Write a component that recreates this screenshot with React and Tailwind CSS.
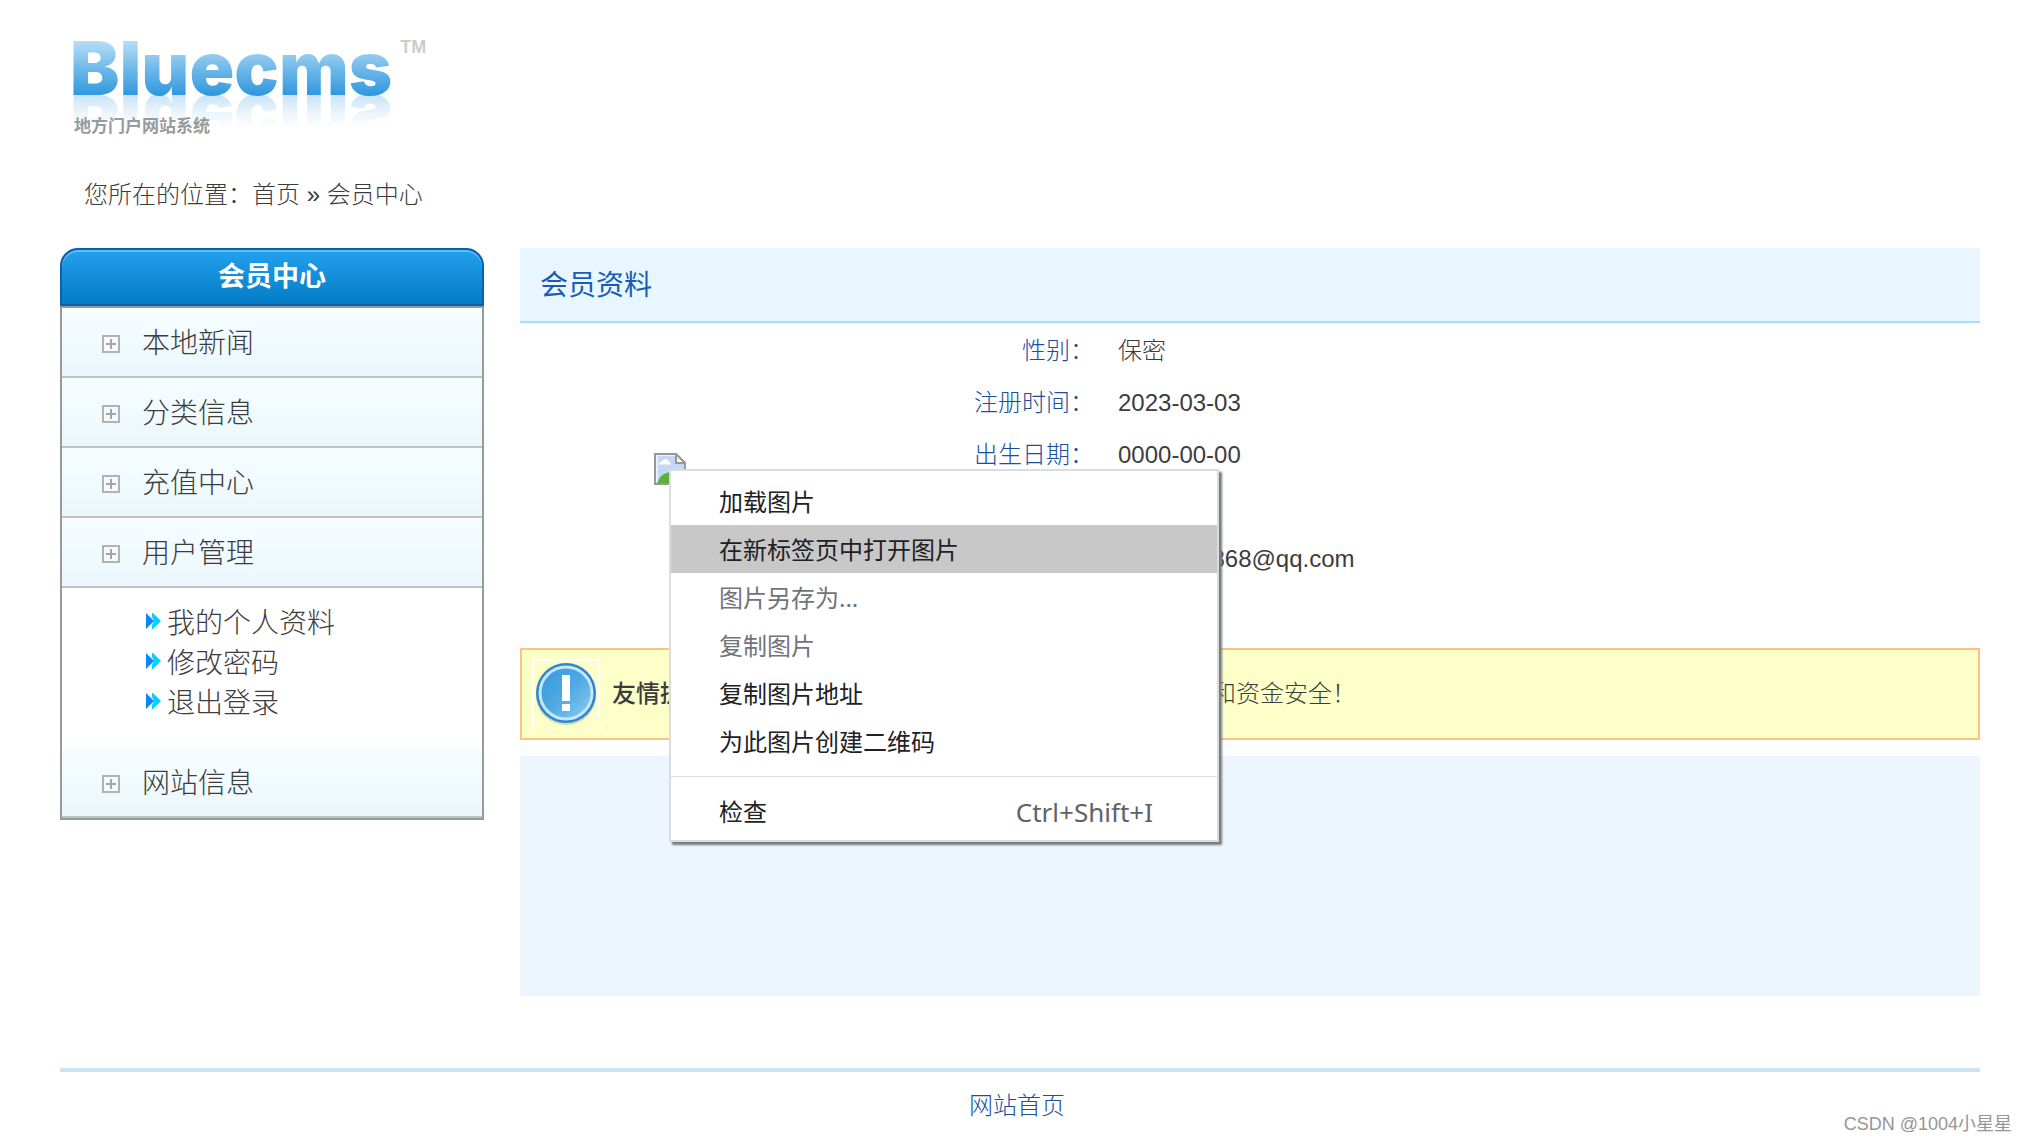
import React, { useState } from 'react';

const MENU = [
  { name: '本地新闻' },
  { name: '分类信息' },
  { name: '充值中心' },
  { name: '用户管理', children: ['我的个人资料', '修改密码', '退出登录'] },
  { name: '网站信息' },
];

const PROFILE = [
  { label: '性别', value: '保密' },
  { label: '注册时间', value: '2023-03-03' },
  { label: '出生日期', value: '0000-00-00' },
  { label: 'QQ', value: '' },
  { label: '电子邮件', value: '1000000868@qq.com' },
  { label: '手机', value: '' },
];

const CONTEXT_ITEMS = [
  { name: '加载图片' },
  { name: '在新标签页中打开图片' },
  { name: '图片另存为...', disabled: true },
  { name: '复制图片', disabled: true },
  { name: '复制图片地址' },
  { name: '为此图片创建二维码' },
];

function Logo() {
  return (
    <div className="pl-2.5">
      <div className="flex items-start gap-2">
        <span className="block h-[74px] bg-gradient-to-b from-[#b4dcf5] from-15% via-[#66b5e8] via-55% to-[#3199df] to-85% bg-clip-text text-transparent font-['Inter',sans-serif] font-black text-[74px] leading-none [-webkit-box-reflect:below_-20px_linear-gradient(transparent_40%,rgba(0,0,0,0.35))]">
          Bluecms
        </span>
        <span className="font-['Liberation_Sans_Narrow','Liberation_Sans',sans-serif] font-bold text-[18px] leading-6 pt-1 text-[#ccc]">TM</span>
      </div>
      <div className="mt-2.5 pl-1 text-[17px] leading-6 font-bold text-[#999]">地方门户网站系统</div>
    </div>
  );
}

function PlusBox() {
  return (
    <svg viewBox="0 0 18 18" className="w-[18px] h-[18px] shrink-0">
      <rect x="1" y="1" width="16" height="16" fill="#f6fafb" stroke="#b0b2b3" strokeWidth="2" />
      <path d="M4 9h10M9 4v10" stroke="#a3a5a6" strokeWidth="2" />
    </svg>
  );
}

function Arrows() {
  return (
    <svg viewBox="0 0 15 18" className="w-[15px] h-[18px] shrink-0">
      <path d="M0 1l8 8-8 8z" fill="#0a84ff" />
      <path d="M6 1h1l8 8-8 8H6v-4l2-4-2-4z" fill="#06d0fd" />
    </svg>
  );
}

function BrokenImage() {
  return (
    <svg viewBox="0 0 32 32" className="block w-8 h-8">
      <path d="M1 1h21l9 9v21H1z" fill="#c6d6f5" stroke="#979797" strokeWidth="2" />
      <path d="M2 2h2v28H2zM2 2h20v1H2z" fill="#e9effb" />
      <path d="M5 11.500q0-3 3-3 1-3 4-2.500 3 .5 3 3 2 .5 2 2.500z" fill="#fff" />
      <path d="M3 30Q7 19 18 19L30 26v4z" fill="#5bb13a" />
      <path d="M22 1v9h9z" fill="#fff" stroke="#979797" strokeWidth="2" />
    </svg>
  );
}

function NoticeIcon() {
  return (
    <svg viewBox="0 0 70 70" className="w-[70px] h-[70px] shrink-0">
      <defs>
        <linearGradient id="noticeFill" x1="0" y1="0" x2="1" y2="1">
          <stop offset="0" stopColor="#3798dc" />
          <stop offset="0.5" stopColor="#4fa9e3" />
          <stop offset="1" stopColor="#8fcdf1" />
        </linearGradient>
      </defs>
      <path d="M1 70V1h69M67 4v54M69 66v4" fill="none" stroke="#fff" strokeWidth="2" />
      <ellipse cx="34" cy="37" rx="30" ry="29" fill="#9db7a8" opacity="0.5" />
      <circle cx="34" cy="34" r="30" fill="#2b86cf" />
      <circle cx="34" cy="34" r="26" fill="url(#noticeFill)" stroke="#c3e7fb" strokeWidth="3" />
      <path d="M30 16h8v26h-8zM30 45h8v7h-8z" fill="#fff" />
    </svg>
  );
}

function Sidebar() {
  return (
    <nav className="w-[424px] shrink-0">
      <h2 className="h-[58px] rounded-t-[18px] border-2 border-[#0562b1] bg-gradient-to-b from-[#23a0ee] to-[#027cc6] shadow-[inset_0_2px_0_#66bdf5] flex items-center justify-center text-[27px] leading-none font-bold text-white">
        会员中心
      </h2>
      <ul className="border-2 border-[#999]">
        {MENU.map((item) => (
          <li key={item.name}>
            <a
              href="#"
              className="flex items-center h-[70px] pl-10 pt-1 gap-[22px] border-b-2 border-[#bcc4c6] bg-gradient-to-b from-[#f6fdff] via-[#f1fbff] to-[#eaf7fa] text-[28px] leading-none"
            >
              <PlusBox />
              <span>{item.name}</span>
            </a>
            {item.children && (
              <ul className="pt-4 pb-6 bg-white">
                {item.children.map((child) => (
                  <li key={child}>
                    <a href="#" className="flex items-center h-10 pl-[84px] gap-1.5 text-[28px] leading-none">
                      <span className="pb-1.5">
                        <Arrows />
                      </span>
                      <span>{child}</span>
                    </a>
                  </li>
                ))}
              </ul>
            )}
          </li>
        ))}
      </ul>
    </nav>
  );
}

function ContextMenu() {
  const [active, setActive] = useState('在新标签页中打开图片');

  return (
    <div className="absolute left-[15px] top-4 z-10 w-[550px] border-2 border-[#dadce0] bg-white pt-1.5 pb-1 shadow-[3px_3px_2px_#777b80] font-['Noto_Sans','Noto_Sans_CJK_SC',sans-serif] font-normal text-[24px] leading-none text-[#202124]">
      {CONTEXT_ITEMS.map((item) => (
        <button
          key={item.name}
          disabled={item.disabled}
          onMouseEnter={() => setActive(item.name)}
          className={`flex items-center w-full h-12 pl-12 pt-0.5 text-left ${
            active === item.name ? 'bg-[#c8c8c8]' : ''
          } ${item.disabled ? 'text-[#6f7479]' : ''}`}
        >
          {item.name}
        </button>
      ))}
      <div className="h-px bg-[#dadce0] my-[11px]" />
      <button className="flex items-center justify-between w-full h-12 pl-12 pr-16">
        <span>检查</span>
        <span className="text-[26px] text-[#5f6368]">Ctrl+Shift+I</span>
      </button>
    </div>
  );
}

export default function App() {
  return (
    <div className="relative min-h-screen bg-white pl-[60px] pr-12 font-['Liberation_Sans','Noto_Sans_CJK_SC',sans-serif] font-light text-[24px] text-[#3c3c3c]">
      <header className="pt-[31px]">
        <a href="#" className="block">
          <Logo />
        </a>
        <div className="mt-8 pl-6 h-12 flex items-center">
          您所在的位置：<a href="#">首页</a>&nbsp;»&nbsp;<a href="#">会员中心</a>
        </div>
      </header>

      <div className="mt-[29px] flex items-start gap-9">
        <Sidebar />

        <main className="flex-1 min-w-0">
          <h1 className="h-[75px] pl-5 pt-0.5 flex items-center border-b-2 border-[#a0e3fd] bg-[#e8f7ff] text-[28px] font-normal text-[#1c5bb5]">
            会员资料
          </h1>

          <div className="mt-0.5 mb-[11px] flex items-center">
            <div className="w-[300px] shrink-0 flex justify-center pb-6">
              <div className="relative">
                <BrokenImage />
                <ContextMenu />
              </div>
            </div>
            <table className="leading-none">
              <tbody>
                {PROFILE.map((row) => (
                  <tr key={row.label} className="h-[52px]">
                    <th scope="row" className="w-[274px] p-0 text-right font-light text-[#1a4f9c]">{row.label}：</th>
                    <td className="p-0 pl-6">{row.value}</td>
                  </tr>
                ))}
              </tbody>
            </table>
          </div>

          {/* Notice */}
          <div className="flex items-center h-[92px] pl-2.5 gap-2.5 border-2 border-[#ffc27d] bg-[#fcffc8]">
            <NoticeIcon />
            <p className="whitespace-nowrap">
              <strong className="font-medium">友情提示：</strong>请不要将您的密码告诉他人，以确保您的帐户和资金安全！
            </p>
          </div>

          <div className="mt-4 h-60 bg-[#edf5fe]" />
        </main>
      </div>

      <footer className="mt-[72px] pt-4 pr-1.5 border-t-4 border-[#cce5f5] text-center">
        <a href="#" className="text-[#1a4f9c]">网站首页</a>
      </footer>

      <div className="absolute right-4 bottom-1 text-[18px] font-normal text-[#969696]">CSDN @1004小星星</div>
    </div>
  );
}
